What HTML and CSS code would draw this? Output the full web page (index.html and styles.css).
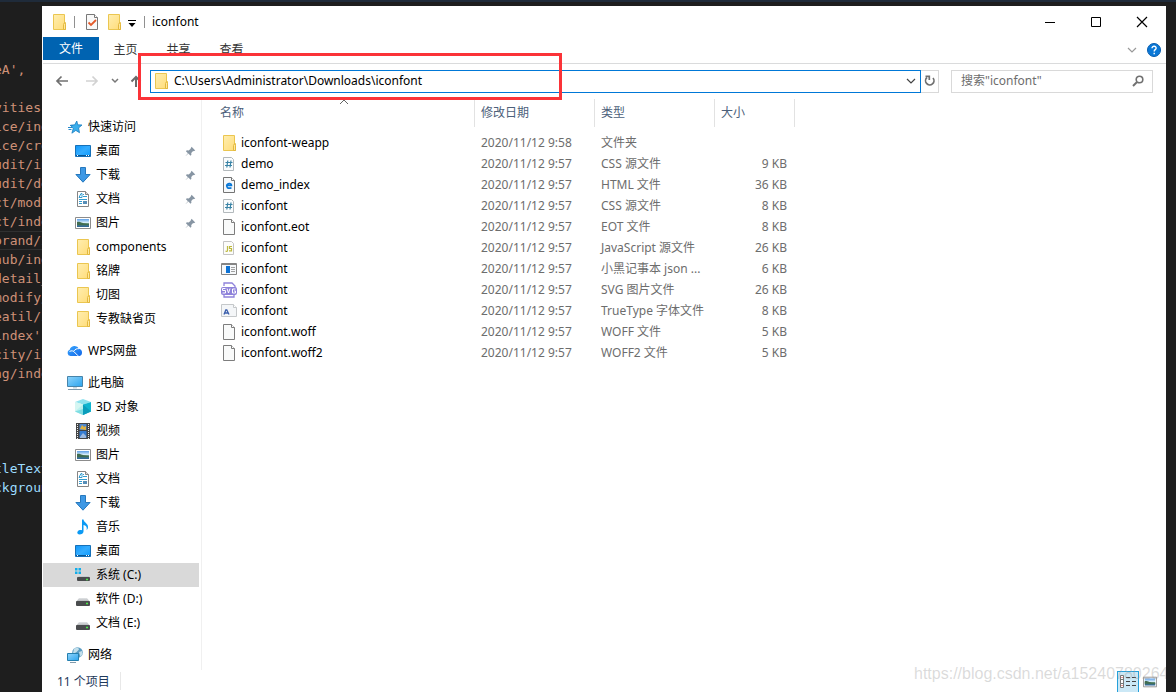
FILE: index.html
```html
<!DOCTYPE html>
<html lang="zh-CN">
<head>
<meta charset="utf-8">
<title>iconfont</title>
<link rel="stylesheet" href="styles.css">
</head>
<body>
<svg class="sprite" aria-hidden="true">
  <defs>
    <linearGradient id="g-folder" x1="0" y1="0" x2="1" y2="1"><stop offset="0" stop-color="#ffeeb0"/><stop offset="1" stop-color="#ffdc78"/></linearGradient>
    <linearGradient id="g-blue" x1="0" y1="0" x2="1" y2="1"><stop offset="0" stop-color="#0f96f8"/><stop offset=".5" stop-color="#35adff"/><stop offset="1" stop-color="#0c9bff"/></linearGradient>
    <linearGradient id="g-screen" x1="0" y1="0" x2="1" y2="1"><stop offset="0" stop-color="#8fd4fb"/><stop offset="1" stop-color="#2ba4ee"/></linearGradient>
    <linearGradient id="g-sky" x1="0" y1="0" x2="0" y2="1"><stop offset="0" stop-color="#5d9fe8"/><stop offset=".45" stop-color="#d8eefa"/><stop offset=".6" stop-color="#4d7f62"/><stop offset="1" stop-color="#2e65a0"/></linearGradient>
    <linearGradient id="g-cloud" x1="0" y1="0" x2="1" y2="1"><stop offset="0" stop-color="#38a6ff"/><stop offset="1" stop-color="#1268e8"/></linearGradient>
    <linearGradient id="g-drive" x1="0" y1="0" x2="0" y2="1"><stop offset="0" stop-color="#e2e4e6"/><stop offset="1" stop-color="#a9adb0"/></linearGradient>
  </defs>
  <symbol id="folder" viewBox="0 0 16 16"><path d="M2.500.5h11v8h1v7h-12z" fill="url(#g-folder)" stroke="#ebc650"/><path d="M12.500 15.500v-5l1-2 1 2v5z" fill="#ffe89c" stroke="#e3b83e"/></symbol>
  <symbol id="star" viewBox="0 0 16 16"><path d="M9.800 2l.9 3.800 4.300.2-3.400 2.900.9 4.800-3.700-2.300-3.900 2.800 1.300-4.600L3.500 6.200l4.200-.4z" fill="#3aaeec" stroke="#1b7dc0" stroke-width=".8"/><path d="M3 6.500h3M1 8.500h4M1.500 10.500h3" stroke="#2589cc"/></symbol>
  <symbol id="desktop" viewBox="0 0 16 16"><path d="M.5 2.500h15v11H.5z" fill="url(#g-blue)" stroke="#1771b8"/><path d="M1 12.500h14" stroke="#075694"/><path d="M2 12.500h1M11 12.500h1M13 12.500h1" stroke="#fff"/></symbol>
  <symbol id="down" viewBox="0 0 16 16"><path d="M5.500.5h5v7h4.600L8 15.200.9 7.500h4.600z" fill="#3d98e5" stroke="#2678bd"/></symbol>
  <symbol id="doc" viewBox="0 0 16 16"><path d="M2.500.5h8l3 3v12h-11z" fill="#fff" stroke="#858585"/><path d="M10.500.5v3h3" fill="#ddd" stroke="#858585"/><path d="M4 6.500l2-4h1v4zM8 3.500h1M8 5.500h4M4 8.500h8M4 10.500h3M4 12.500h3" fill="none" stroke="#329cd0"/><path d="M8 10h4v3H8z" fill="#568eb8"/></symbol>
  <symbol id="picture" viewBox="0 0 16 16"><path d="M.5 2.500h15v11H.5z" fill="#fff" stroke="#8c8c8c"/><path d="M2 4h12v8H2z" fill="url(#g-sky)"/><path d="M2 7c3-1 5 2 12 2v1H2z" fill="#416d51"/></symbol>
  <symbol id="pin" viewBox="0 0 12 12"><path d="M7.200.8l4 4-1.200.7-1.400.2-1.800 1.900.2 2-1 1-2.300-2.300L.8 11l-.2-.2 2.600-3L1 5.700l1-1 2 .2 1.900-1.700z" fill="#8795a3"/></symbol>
  <symbol id="cloud" viewBox="0 0 16 16"><path d="M3.500 13a3.200 3.200 0 0 1-.8-6.200A5 5 0 0 1 12 5.700 3.800 3.800 0 0 1 12.500 13z" fill="url(#g-cloud)"/><path d="M2.500 8.500C7 6 8 11 11.500 13M6.500 8.500C8 6 10 5.500 12 5.700" fill="none" stroke="#fff"/></symbol>
  <symbol id="pc" viewBox="0 0 16 16"><path d="M.5 1.500h15v10H.5z" fill="url(#g-screen)" stroke="#4784aa"/><path d="M6 12h4v1.500H6z" fill="#c8d6de"/><path d="M1 14.500h14" stroke="#7c98ab"/></symbol>
  <symbol id="cube" viewBox="0 0 16 16"><path d="M0 3l8-3 8 3-8 2.500z" fill="#8fe2ee"/><path d="M0 3l8 2.500V16l-8-3.500z" fill="#b9f0ee"/><path d="M8 5.500L16 3v9.500L8 16z" fill="#11b5cf"/><path d="M8 5.500L16 12.500 8 16z" fill="#0a9dbb"/><path d="M0 3l8 2.500L0 12.500z" fill="#d5f6f2"/><path d="M0 12.500l8-2.500v6z" fill="#7edde3"/></symbol>
  <symbol id="video" viewBox="0 0 16 16"><path d="M1 0h14v16H1z" fill="#444"/><path d="M4.500 1h7v6h-7z" fill="#4d88d0"/><path d="M4.500 8h7v7h-7z" fill="#367cd1"/><path d="M5 6l2-4 2 2 2-1v4z" fill="#dfb241"/><path d="M5 14l3-4 3 3v2H5z" fill="#9dbae0"/><path d="M2.500 1v15M13.500 1v15" stroke="#eee" stroke-dasharray="1 1"/></symbol>
  <symbol id="music" viewBox="0 0 16 16"><path d="M7 .5h1.500c.3 3 4.800 4 4.500 7.500 0 1.500-.7 2.500-1.500 3 1-3-.8-4.500-3-5v6.500c0 2-2 3-4 3-3 0-3-4 .5-4.500 1-.1 2 .2 2 .2z" fill="#0b9af4"/></symbol>
  <symbol id="drive" viewBox="0 0 16 16"><path d="M4 7h8l3 4H1z" fill="url(#g-drive)"/><rect x="1" y="10" width="14" height="5" rx="1" fill="#4a4c4e"/><path d="M11 12.500h2" stroke="#4bec49" stroke-width="1.500"/></symbol>
  <symbol id="sysdrive" viewBox="0 0 16 16"><path d="M5 8h8l2 3H2z" fill="url(#g-drive)"/><rect x="2" y="10" width="13" height="4" rx="1" fill="#4a4c4e"/><path d="M11 12.500h2" stroke="#4bec49" stroke-width="1.500"/><path d="M0 1h2.500v2.500H0zM3.500 1H6v2.500H3.500zM0 4.500h2.500V7H0zM3.500 4.500H6V7H3.500z" fill="#12aeeb"/></symbol>
  <symbol id="network" viewBox="0 0 16 16"><circle cx="10.500" cy="5.500" r="5.300" fill="#5a9cc2"/><path d="M7 1.500l4-1 1 2-3 3-3 1zM12 5l3-1 .5 3-2 3z" fill="#c3dfeb"/><path d="M.5 6.500h11v7H.5z" fill="url(#g-screen)" stroke="#257fae"/><path d="M3 15.500h6" stroke="#829bac"/></symbol>
  <symbol id="file" viewBox="0 0 16 16"><path d="M2.500.5h8l3 3v12h-11z" fill="#f9fafa" stroke="#7d7d7d"/><path d="M10.500.5v3h3" fill="#fff" stroke="#7d7d7d"/></symbol>
  <symbol id="css" viewBox="0 0 16 16"><path d="M2.500 1.500h8l2 2v11h-10z" fill="#fafcfd" stroke="#b3b9bc"/><path d="M6.800 4.500l-1 7M10 4.500l-1 7M4.500 6.500h7M4 9.500h7" stroke="#3a84a6" stroke-width="1.200"/></symbol>
  <symbol id="html" viewBox="0 0 16 16"><path d="M2.500.5h8l3 3v12h-11z" fill="#f7f9fa" stroke="#747474"/><path d="M10.500.5v3h3" fill="#fff" stroke="#747474"/><path d="M10.500 10.700c-4 1.500-5.500-1-4.500-3 1.300-2 4.700-1 4.500.8H5.500" fill="none" stroke="#0a78d7" stroke-width="1.700"/></symbol>
  <symbol id="js" viewBox="0 0 16 16"><path d="M2.500 1.500h8l2 2v11h-10z" fill="#fcfcfa" stroke="#c4c4c4"/><path d="M6.500 6v4.500c0 1-1 1-2 .5M11 6.500H8.500V8.500h2v2.300H8" fill="none" stroke="#bdb93d" stroke-width="1.200"/></symbol>
  <symbol id="json" viewBox="0 0 16 16"><path d="M.5 2.500h15v11H.5z" fill="#f6f8fa" stroke="#858585"/><path d="M1 3.500h14" stroke="#858585"/><path d="M5 5h4v7H5z" fill="#0c72d5"/><path d="M10 6.500h4M10 8.500h4M10 10.500h4" stroke="#a1a1a1"/></symbol>
  <symbol id="svgfile" viewBox="0 0 16 16"><path d="M3 4V1h8l3 3v2M3 12v3h10v-3" fill="#fff" stroke="#8e82da" stroke-width="1.300"/><rect y="5" width="16" height="8" rx="2" fill="#8e82da"/><path d="M4.500 6.500h-3v2h3v2.500h-3M6 6.500l1.500 4.500L9 6.500M14.500 7h-3v4h3V9H13" fill="none" stroke="#fff"/></symbol>
  <symbol id="ttf" viewBox="0 0 16 16"><path d="M.5 1.500h12l3 3v9H.5z" fill="#f4f6f8" stroke="#c5c8ca"/><path d="M12.500 1.500v3h3" fill="#fff" stroke="#c5c8ca"/><path d="M3 11.500l1.800-4.500h1L8 11.500M4 10h3" fill="none" stroke="#3a5dab" stroke-width="1.300"/></symbol>
  <symbol id="checkdoc" viewBox="0 0 16 16"><path d="M2.500.5h8l3 3v12h-11z" fill="#f8f8f8" stroke="#787878"/><path d="M10.500.5v3h3" fill="#fff" stroke="#787878"/><path d="M4.500 8.500l2.500 2.500 5-5" fill="none" stroke="#e35a2b" stroke-width="1.800"/></symbol>
</svg>

<div class="screen">
  <div class="editor" aria-hidden="true">
    <pre class="code">



eA',

vities
ice/ind
ice/cre
udit/in
udit/de
ct/modi
ct/inde
<span class="current">brand/i</span>
hub/ind
detail_
modify/
eatil/i
index'
city/in
ng/inde




<span class="key">tleText
ckgroun</span></pre>
  </div>

  <div class="window">
    <header class="titlebar">
      <svg class="icon"><use href="#folder"/></svg>
      <span class="bar"></span>
      <button class="tool" aria-label="属性"><svg class="icon"><use href="#checkdoc"/></svg></button>
      <button class="tool" aria-label="新建文件夹"><svg class="icon"><use href="#folder"/></svg></button>
      <button class="tool customize" aria-label="自定义"><svg width="8" height="10" viewBox="0 0 8 10"><path d="M0 3.500h8" stroke="#000"/><path d="M.5 6h7L4 10z"/></svg></button>
      <span class="bar"></span>
      <h1 class="title">iconfont</h1>
      <div class="caption">
        <button aria-label="最小化"><svg width="12" height="12"><path d="M1 6.500h10" stroke="#000"/></svg></button>
        <button aria-label="最大化"><svg width="12" height="12"><path d="M1.500 1.500h9v9h-9z" fill="none" stroke="#000"/></svg></button>
        <button aria-label="关闭"><svg width="12" height="12"><path d="M1 1l10 10M11 1L1 11" stroke="#000" stroke-width="1.200"/></svg></button>
      </div>
    </header>

    <nav class="ribbon">
      <button class="tab file">文件</button>
      <button class="tab">主页</button>
      <button class="tab">共享</button>
      <button class="tab">查看</button>
      <div class="ribbon-end">
        <button aria-label="展开功能区"><svg width="10" height="8"><path d="M1 2l4 4 4-4" fill="none" stroke="#999" stroke-width="1.200"/></svg></button>
        <button aria-label="帮助"><svg width="14" height="14"><circle cx="7" cy="7" r="6.500" fill="#0a78d7" stroke="#075cae"/><path d="M5 5.300c0-2.800 4.300-2.500 4.100 0C9 6.800 7.200 6.600 7.200 8.500M7.200 9.700v1.600" fill="none" stroke="#fff" stroke-width="1.400"/></svg></button>
      </div>
    </nav>

    <div class="navbar">
      <div class="arrows">
        <button aria-label="后退"><svg width="14" height="12"><path d="M13 6H2M6.500 1.500L2 6l4.500 4.500" fill="none" stroke="#707070" stroke-width="1.700"/></svg></button>
        <button aria-label="前进"><svg width="14" height="12"><path d="M1 6h11M7.500 1.500L12 6l-4.500 4.500" fill="none" stroke="#d2d2d2" stroke-width="1.700"/></svg></button>
        <button aria-label="最近位置"><svg width="8" height="6"><path d="M1 1l3 3 3-3" fill="none" stroke="#777" stroke-width="1.500"/></svg></button>
        <button aria-label="上移"><svg width="12" height="12"><path d="M6 12V2M1.500 6.500L6 2l4.500 4.500" fill="none" stroke="#6b6b6b" stroke-width="2"/></svg></button>
      </div>
      <div class="address">
        <svg class="icon"><use href="#folder"/></svg>
        <input type="text" aria-label="地址" value="C:\Users\Administrator\Downloads\iconfont">
        <button aria-label="历史"><svg width="10" height="8"><path d="M1 2l4 4 4-4" fill="none" stroke="#444" stroke-width="1.200"/></svg></button>
      </div>
      <button class="refresh" aria-label="刷新"><svg width="12" height="12"><path d="M3 2.500a4.200 4.200 0 1 0 6 .5" fill="none" stroke="#707070" stroke-width="1.700"/><path d="M1.500 1.300h3.800V5" fill="none" stroke="#707070" stroke-width="1.700"/></svg></button>
      <div class="search">
        <input type="text" aria-label="搜索" placeholder="搜索&quot;iconfont&quot;">
        <svg width="12" height="12"><circle cx="7.500" cy="4.500" r="3.300" fill="none" stroke="#707070" stroke-width="1.600"/><path d="M5 7L1 11" stroke="#707070" stroke-width="2"/></svg>
      </div>
    </div>

    <div class="body">
      <aside class="tree">
        <div class="group">
          <a href="#" class="root"><svg class="icon"><use href="#star"/></svg>快速访问</a>
          <a href="#"><svg class="icon"><use href="#desktop"/></svg>桌面<svg class="pin"><use href="#pin"/></svg></a>
          <a href="#"><svg class="icon"><use href="#down"/></svg>下载<svg class="pin"><use href="#pin"/></svg></a>
          <a href="#"><svg class="icon"><use href="#doc"/></svg>文档<svg class="pin"><use href="#pin"/></svg></a>
          <a href="#"><svg class="icon"><use href="#picture"/></svg>图片<svg class="pin"><use href="#pin"/></svg></a>
          <a href="#"><svg class="icon"><use href="#folder"/></svg>components</a>
          <a href="#"><svg class="icon"><use href="#folder"/></svg>铭牌</a>
          <a href="#"><svg class="icon"><use href="#folder"/></svg>切图</a>
          <a href="#"><svg class="icon"><use href="#folder"/></svg>专教缺省页</a>
        </div>
        <div class="group">
          <a href="#" class="root"><svg class="icon"><use href="#cloud"/></svg>WPS网盘</a>
        </div>
        <div class="group">
          <a href="#" class="root"><svg class="icon"><use href="#pc"/></svg>此电脑</a>
          <a href="#"><svg class="icon"><use href="#cube"/></svg>3D 对象</a>
          <a href="#"><svg class="icon"><use href="#video"/></svg>视频</a>
          <a href="#"><svg class="icon"><use href="#picture"/></svg>图片</a>
          <a href="#"><svg class="icon"><use href="#doc"/></svg>文档</a>
          <a href="#"><svg class="icon"><use href="#down"/></svg>下载</a>
          <a href="#"><svg class="icon"><use href="#music"/></svg>音乐</a>
          <a href="#"><svg class="icon"><use href="#desktop"/></svg>桌面</a>
          <a href="#" class="selected"><svg class="icon"><use href="#sysdrive"/></svg>系统 (C:)</a>
          <a href="#"><svg class="icon"><use href="#drive"/></svg>软件 (D:)</a>
          <a href="#"><svg class="icon"><use href="#drive"/></svg>文档 (E:)</a>
        </div>
        <div class="group">
          <a href="#" class="root"><svg class="icon"><use href="#network"/></svg>网络</a>
        </div>
      </aside>

      <main class="files">
        <table>
          <colgroup><col class="c-name"><col class="c-date"><col class="c-type"><col class="c-size"></colgroup>
          <thead>
            <tr><th>名称<svg class="sort" width="10" height="6"><path d="M1 5l4-4 4 4" fill="none" stroke="#666"/></svg></th><th>修改日期</th><th>类型</th><th>大小</th></tr>
          </thead>
          <tbody>
            <tr><td><span class="name"><svg class="icon"><use href="#folder"/></svg>iconfont-weapp</span></td><td>2020/11/12 9:58</td><td>文件夹</td><td></td></tr>
            <tr><td><span class="name"><svg class="icon"><use href="#css"/></svg>demo</span></td><td>2020/11/12 9:57</td><td>CSS 源文件</td><td>9 KB</td></tr>
            <tr><td><span class="name"><svg class="icon"><use href="#html"/></svg>demo_index</span></td><td>2020/11/12 9:57</td><td>HTML 文件</td><td>36 KB</td></tr>
            <tr><td><span class="name"><svg class="icon"><use href="#css"/></svg>iconfont</span></td><td>2020/11/12 9:57</td><td>CSS 源文件</td><td>8 KB</td></tr>
            <tr><td><span class="name"><svg class="icon"><use href="#file"/></svg>iconfont.eot</span></td><td>2020/11/12 9:57</td><td>EOT 文件</td><td>8 KB</td></tr>
            <tr><td><span class="name"><svg class="icon"><use href="#js"/></svg>iconfont</span></td><td>2020/11/12 9:57</td><td>JavaScript 源文件</td><td>26 KB</td></tr>
            <tr><td><span class="name"><svg class="icon"><use href="#json"/></svg>iconfont</span></td><td>2020/11/12 9:57</td><td>小黑记事本 json ...</td><td>6 KB</td></tr>
            <tr><td><span class="name"><svg class="icon"><use href="#svgfile"/></svg>iconfont</span></td><td>2020/11/12 9:57</td><td>SVG 图片文件</td><td>26 KB</td></tr>
            <tr><td><span class="name"><svg class="icon"><use href="#ttf"/></svg>iconfont</span></td><td>2020/11/12 9:57</td><td>TrueType 字体文件</td><td>8 KB</td></tr>
            <tr><td><span class="name"><svg class="icon"><use href="#file"/></svg>iconfont.woff</span></td><td>2020/11/12 9:57</td><td>WOFF 文件</td><td>5 KB</td></tr>
            <tr><td><span class="name"><svg class="icon"><use href="#file"/></svg>iconfont.woff2</span></td><td>2020/11/12 9:57</td><td>WOFF2 文件</td><td>5 KB</td></tr>
          </tbody>
        </table>
      </main>
    </div>

    <footer class="status">
      <span class="count">11 个项目</span>
      <div class="views">
        <button class="on" aria-label="详细信息"><svg width="16" height="14"><path d="M.5.5h3v12h-3zM.5 4.500h3M.5 8.500h3" fill="#fff" stroke="#777"/><path d="M2 2v1M2 10v1" stroke="#c33"/><path d="M6 2.500h4M12 2.500h4M6 6.500h4M12 6.500h4M6 10.500h4M12 10.500h4" stroke="#444"/></svg></button>
        <button aria-label="大图标"><svg width="14" height="14" viewBox="0 0 16 16"><use href="#picture"/></svg></button>
      </div>
    </footer>
    <div class="watermark">https://blog.csdn.net/a15240780264</div>
    <div class="highlight"></div>
  </div>
</div>
</body>
</html>
```

FILE: styles.css
```css
* { box-sizing: border-box; }

body {
  margin: 0;
  background: #1e1e1e;
  font: 12px/16px "Noto Sans", "Noto Sans CJK SC", sans-serif;
  color: #000;
}

svg { display: block; flex: none; }
.sprite { position: absolute; width: 0; height: 0; }
.icon { width: 16px; height: 16px; }

button {
  display: flex;
  align-items: center;
  justify-content: center;
  padding: 0;
  border: 0;
  background: none;
  font: inherit;
  color: inherit;
}

input {
  flex: 1;
  min-width: 0;
  padding: 0;
  border: 0;
  outline: 0;
  background: none;
  font: inherit;
  color: inherit;
}

.screen {
  display: flex;
  min-height: 100vh;
  padding-right: 10px;
  border-top: 2px solid #1f2b3a;
}

.editor {
  flex: none;
  width: 42px;
  padding-top: 1px;
  overflow: hidden;
}
.code {
  margin: 0 0 0 -6px;
  font: 13px/19px "DejaVu Sans Mono", monospace;
  color: #ce9178;
}
.code .current { display: block; margin-bottom: -19px; box-shadow: inset 0 1px #303030, inset 0 -1px #303030; }
.code .key { display: block; color: #9cdcfe; }

.window {
  position: relative;
  flex: 1;
  min-width: 0;
  display: flex;
  flex-direction: column;
  margin-top: 4px;
  padding-left: 1px;
  background: #fff;
}

.titlebar {
  display: flex;
  align-items: center;
  height: 31px;
  padding-left: 8px;
}
.bar { width: 1px; height: 12px; margin: 0 8px 0 7px; background: #909090; }
.tool + .tool { margin-left: 6px; }
.titlebar .bar + .tool { margin-left: 1px; }
.titlebar .customize + .bar { margin: 0 7px 0 8px; }
.title { margin: 0; font-size: 12px; font-weight: 400; }
.caption { display: flex; margin: 0 1px 0 auto; }
.caption button { width: 46px; height: 30px; }

.ribbon {
  display: flex;
  height: 27px;
  padding-bottom: 3px;
  border-bottom: 1px solid #dadbdc;
  color: #333;
}
.tab { width: 53px; padding-top: 2px; }
.tab.file { width: 56px; padding-top: 0; background: #0063b1; color: #fff; }
.ribbon-end { display: flex; align-items: center; gap: 10px; margin: 3px 5px 0 auto; }

.navbar {
  display: flex;
  align-items: center;
  height: 34px;
  padding: 0 13px 0 12px;
}
.arrows { display: flex; align-items: center; gap: 14px; margin-right: 8px; }
.arrows button:nth-child(2) { margin-left: 2px; margin-right: -2px; }
.arrows button:last-child { margin-left: -3px; }
.address {
  flex: 1;
  display: flex;
  align-items: center;
  height: 23px;
  padding: 0 4px 0 2px;
  border: 1px solid #0078d7;
}
.address input { margin-left: 5px; }
.refresh { width: 18px; height: 23px; margin-right: 12px; border: 1px solid #d9d9d9; border-left: 0; }
.search {
  display: flex;
  align-items: center;
  width: 202px;
  height: 23px;
  padding: 0 8px 0 9px;
  border: 1px solid #d9d9d9;
}
.search input::placeholder { color: #6d6d6d; opacity: 1; }

.body { flex: 1; display: flex; }
.tree {
  flex: none;
  width: 159px;
  padding: 17px 2px 3px 0;
  border-right: 1px solid #f0f0f0;
}
.group + .group { margin-top: 8px; }
.tree a {
  display: flex;
  align-items: center;
  gap: 5px;
  height: 24px;
  padding: 0 3px 0 32px;
  color: #000;
  text-decoration: none;
}
.tree a.root { padding-left: 24px; }
.tree a.selected { background: #d9d9d9; }
.pin { width: 11px; height: 11px; margin-left: auto; }

.files { flex: 1; padding: 1px 0 0 12px; }
table { border-collapse: separate; border-spacing: 0; table-layout: fixed; width: 581px; }
.c-name { width: 261px; }
.c-size { width: 80px; }
.c-date, .c-type { width: 120px; }
th {
  position: relative;
  height: 28px;
  padding: 0 6px;
  border-right: 1px solid #e2e2e2;
  color: #4c607a;
  font-weight: 400;
  text-align: left;
}
.sort { position: absolute; top: 0; left: 125px; }
tbody::before { content: ""; display: block; height: 5px; }
td { height: 21px; padding: 0 8px 0 6px; color: #6d6d6d; white-space: nowrap; }
td:last-child { text-align: right; }
.name { display: flex; align-items: center; gap: 4px; padding-left: 1px; color: #000; }

.status {
  display: flex;
  align-items: center;
  height: 22px;
  padding-left: 14px;
  color: #1e395b;
}
.count { padding: 2px 10px 0 0; border-right: 1px solid #e8e8e8; }
.views { display: flex; align-self: stretch; margin: 1px 5px 0 auto; }
.views button { width: 22px; }
.views .on { background: #cbe8f6; border: 1px solid #26a0da; border-bottom: 0; }

.watermark {
  position: absolute;
  right: 0;
  bottom: 8px;
  width: 252px;
  overflow: hidden;
  font: 16px/20px "Liberation Sans", sans-serif;
  color: rgba(150, 150, 150, 0.35);
  white-space: nowrap;
}
.highlight {
  position: absolute;
  top: 47px;
  left: 96px;
  width: 424px;
  height: 47px;
  border: 3px solid #fb3338;
}
```
